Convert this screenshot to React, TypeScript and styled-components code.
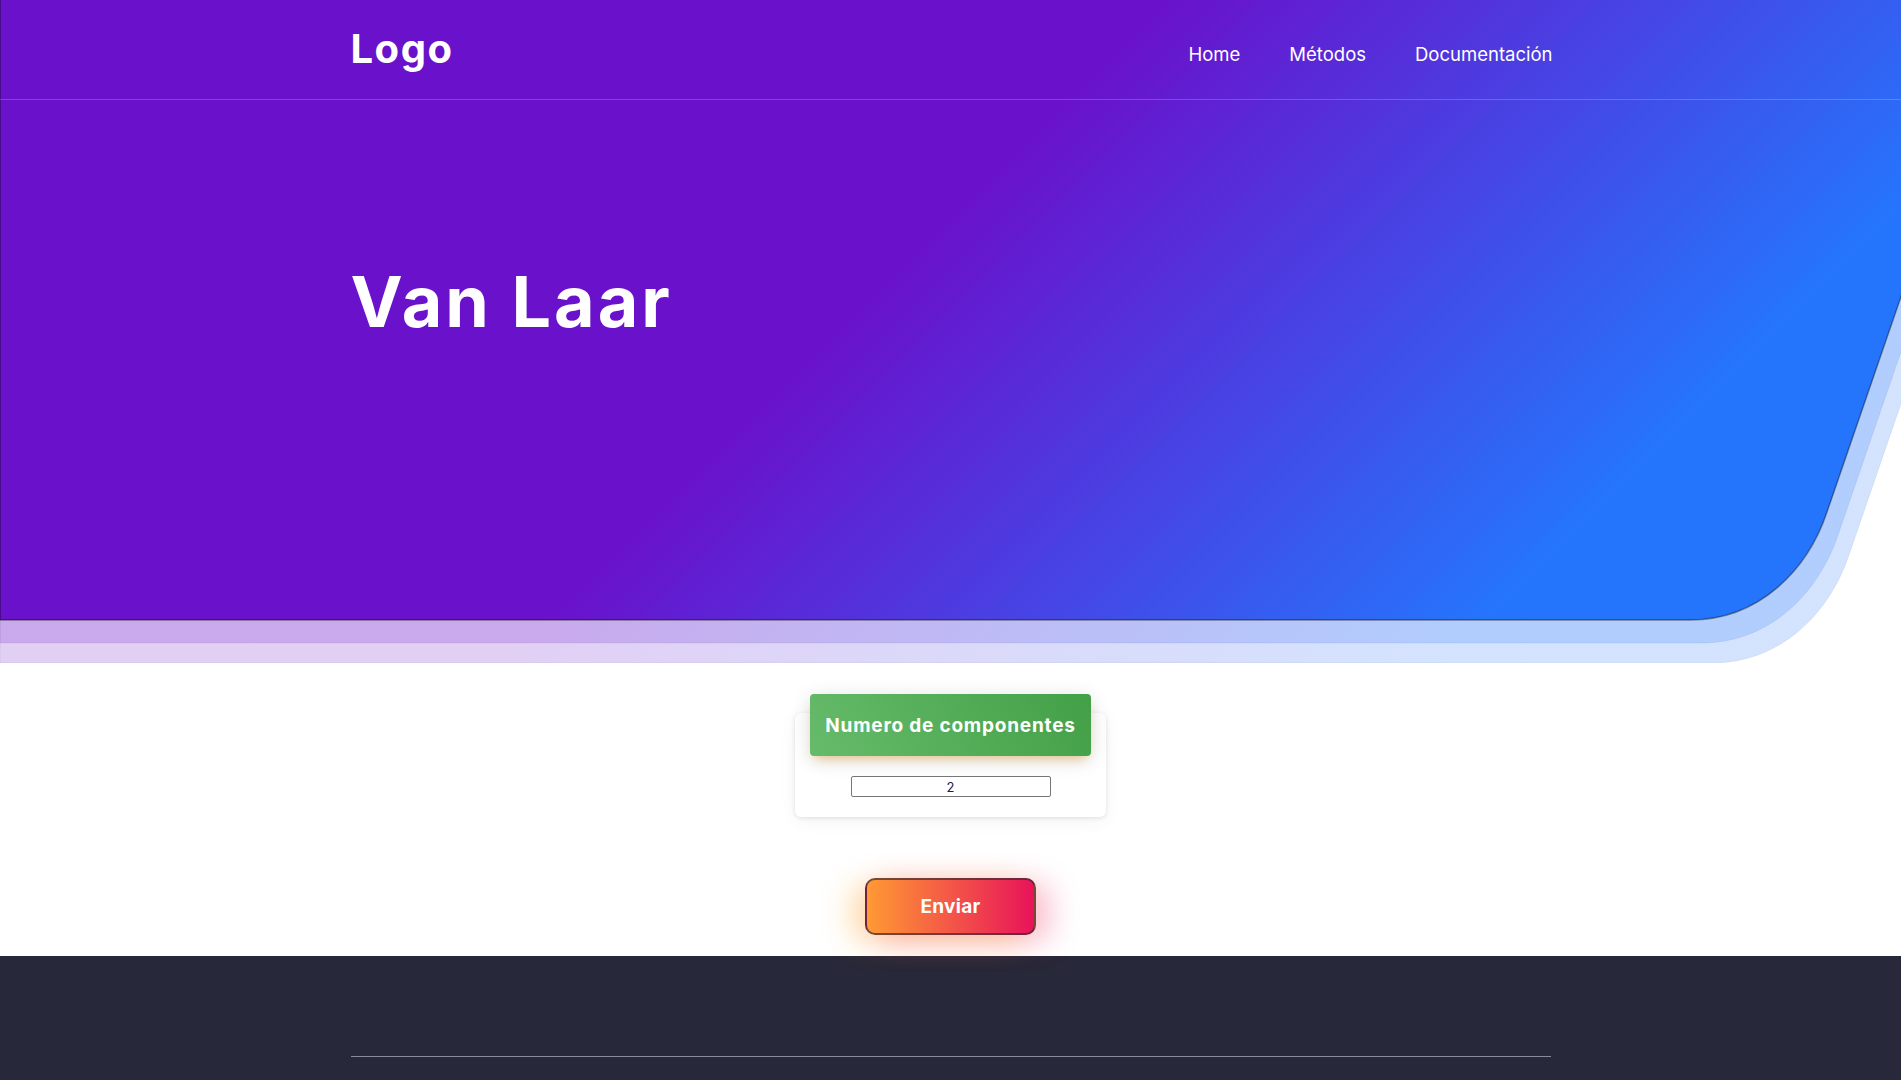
import styled, { createGlobalStyle } from "styled-components";
import { useState } from "react";

const GlobalStyle = createGlobalStyle`
  html, body {
    margin: 0;
    padding: 0;
  }
  body {
    font-family: Inter, "Open Sans", sans-serif;
    background: #fff;
  }
  * {
    box-sizing: border-box;
  }
`;

const Hero = styled.section`
  position: relative;
  height: 663px;
  color: #fff;
`;

/* drawing behind the hero: gradient shape with two faded layers */
const Backdrop = styled.svg`
  position: absolute;
  top: 0;
  left: 0;
  width: 100%;
  height: 100%;
  display: block;
  z-index: 0;
`;

const Container = styled.div`
  width: 1200px;
  margin: 0 auto;
`;

const Bar = styled.header`
  position: relative;
  z-index: 1;
  height: 100px;
  border-bottom: 1px solid rgba(255, 255, 255, 0.2);
`;

const BarInner = styled(Container)`
  height: 100%;
  display: flex;
  align-items: center;
  justify-content: space-between;
`;

const Logo = styled.a`
  font-size: 40px;
  font-weight: 700;
  letter-spacing: 1.5px;
  color: #fff;
  text-decoration: none;
  margin-top: -3px;
`;

const Nav = styled.nav`
  display: flex;
  gap: 49px;
  margin: 8px -2px 0 0;
`;

const NavLink = styled.a`
  font-size: 18.5px;
  color: #fff;
  text-decoration: none;
`;

const HeroBody = styled(Container)`
  position: relative;
  z-index: 1;
  padding-top: 160px;
`;

const Title = styled.h1`
  margin: 0;
  font-size: 70px;
  line-height: 1.2;
  font-weight: 700;
  letter-spacing: 3px;
`;

const Main = styled.main`
  display: flex;
  flex-direction: column;
  align-items: center;
  padding: 50px 0 21px;
`;

const Card = styled.div`
  width: 311px;
  background: #fff;
  border-radius: 6px;
  box-shadow: 0 1px 4px 0 rgba(0, 0, 0, 0.1), 0 4px 18px rgba(0, 0, 0, 0.05);
`;

const CardHeader = styled.div`
  margin: -19px 15px 0;
  height: 62px;
  border-radius: 4px;
  background: linear-gradient(60deg, #66bb6a, #43a047);
  box-shadow: 0 4px 20px 0 rgba(0, 0, 0, 0.14), 0 7px 10px -5px rgba(255, 152, 0, 0.4);
  display: flex;
  align-items: center;
  justify-content: center;
  color: #fff;
  font-weight: 700;
  font-size: 19px;
  letter-spacing: 0.8px;
`;

const CardBody = styled.div`
  padding: 20px;
  display: flex;
  justify-content: center;
`;

const NumberInput = styled.input`
  width: 200px;
  height: 21px;
  padding: 0 4px;
  border: 1px solid #767676;
  border-radius: 2px;
  text-align: center;
  font-family: Inter, sans-serif;
  font-size: 13px;
  color: #1e2040;
  outline: none;
`;

const SendButton = styled.button`
  margin-top: 61px;
  width: 171px;
  height: 57px;
  border-radius: 10px;
  border: 2px solid rgba(60, 40, 50, 0.7);
  background: linear-gradient(90deg, #ff9a34, #e8135a);
  color: #fff;
  font-family: Inter, sans-serif;
  font-size: 19px;
  font-weight: 700;
  letter-spacing: 0.3px;
  cursor: pointer;
  box-shadow: -14px 6px 30px rgba(255, 152, 0, 0.3), 14px 6px 30px rgba(233, 30, 99, 0.28);
`;

const Footer = styled.footer`
  background: #272839;
  height: 124px;
  padding-top: 100px;
`;

const Rule = styled(Container)`
  border-top: 1px solid #8a8c99;
`;

export default function App() {
  const [count, setCount] = useState("2");

  return (
    <>
      <GlobalStyle />
      <Hero>
        <Backdrop viewBox="0 0 1901 663" preserveAspectRatio="none">
          <defs>
            <linearGradient id="heroGrad" gradientUnits="userSpaceOnUse" x1="580" y1="580" x2="1054" y2="1054">
              <stop offset="0" stopColor="#6a11cb" />
              <stop offset="1" stopColor="#2575fc" />
            </linearGradient>
          </defs>
          <path
            d="M0,-2 H1925 V334 L1849,555 C1830,612 1782,663 1712,663 H0 Z"
            fill="url(#heroGrad)"
            fillOpacity="0.2"
            stroke="rgba(0,0,0,0.06)"
          />
          <path
            d="M0,-2 H1914 V314 L1838,535 C1819,592 1771,643 1701,643 H0 Z"
            fill="url(#heroGrad)"
            fillOpacity="0.2"
            stroke="rgba(0,0,0,0.06)"
          />
          <path
            d="M0,-2 H1903 V291 L1827,512 C1808,569 1760,620 1690,620 H0 Z"
            fill="url(#heroGrad)"
            stroke="rgba(0,0,0,0.4)"
            strokeWidth="1.5"
          />
        </Backdrop>
        <Bar>
          <BarInner>
            <Logo href="#">Logo</Logo>
            <Nav>
              <NavLink href="#">Home</NavLink>
              <NavLink href="#">Métodos</NavLink>
              <NavLink href="#">Documentación</NavLink>
            </Nav>
          </BarInner>
        </Bar>
        <HeroBody>
          <Title>Van Laar</Title>
        </HeroBody>
      </Hero>
      <Main>
        <Card>
          <CardHeader>Numero de componentes</CardHeader>
          <CardBody>
            <NumberInput
              type="text"
              value={count}
              onChange={(e) => setCount(e.target.value)}
            />
          </CardBody>
        </Card>
        <SendButton>Enviar</SendButton>
      </Main>
      <Footer>
        <Rule />
      </Footer>
    </>
  );
}
